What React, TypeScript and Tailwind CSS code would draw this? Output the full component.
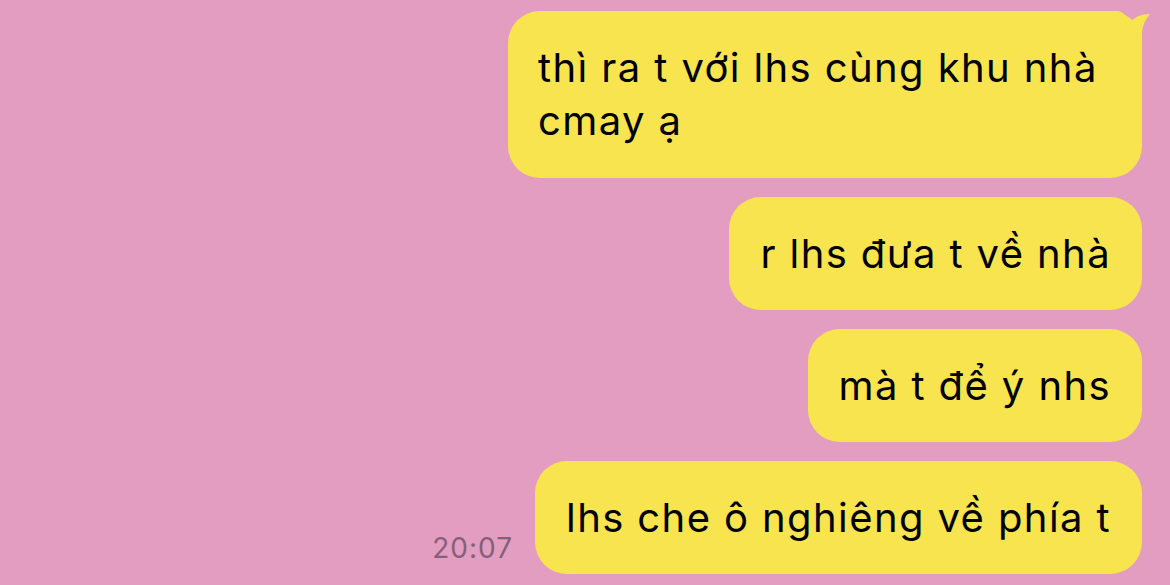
const messages = [
  "r lhs đưa t về nhà",
  "mà t để ý nhs",
];

function Tail() {
  return (
    <svg
      className="absolute -right-[8px] top-0 h-[40px] w-[40px]"
      viewBox="0 0 40 40"
      fill="#f8e44f"
    >
      <path d="M0 0 H7 C13 0 17 6 20 11 C25 6 31 3 40 3 C36 8 32 14 32 24 V40 H0 Z" />
    </svg>
  );
}

const bubble =
  "rounded-[32px] bg-[#f8e44f] px-[31px] py-[30px] text-[40px] leading-[53px] tracking-[1.4px]";

export default function App() {
  return (
    <div
      className="flex h-[585px] w-[1170px] flex-col items-end gap-[19px] overflow-hidden bg-[#e39dc0] pr-[28px] pt-[11px] text-black"
      style={{ fontFamily: "Inter, 'Noto Sans', sans-serif" }}
    >
      <div className="relative w-[634px] rounded-[32px] bg-[#f8e44f] px-[30px] pb-[31px] pt-[30px] text-[40px] leading-[53px] tracking-[1.4px]">
        <Tail />
        <span className="relative">thì ra t với lhs cùng khu nhà cmay ạ</span>
      </div>
      {messages.map((m) => (
        <div key={m} className={bubble}>
          {m}
        </div>
      ))}
      <div className="flex items-end gap-[22px]">
        <span className="mb-[8px] text-[28px] leading-[36px] tracking-[1px] text-[#85607a]">20:07</span>
        <div className={bubble}>lhs che ô nghiêng về phía t</div>
      </div>
    </div>
  );
}
